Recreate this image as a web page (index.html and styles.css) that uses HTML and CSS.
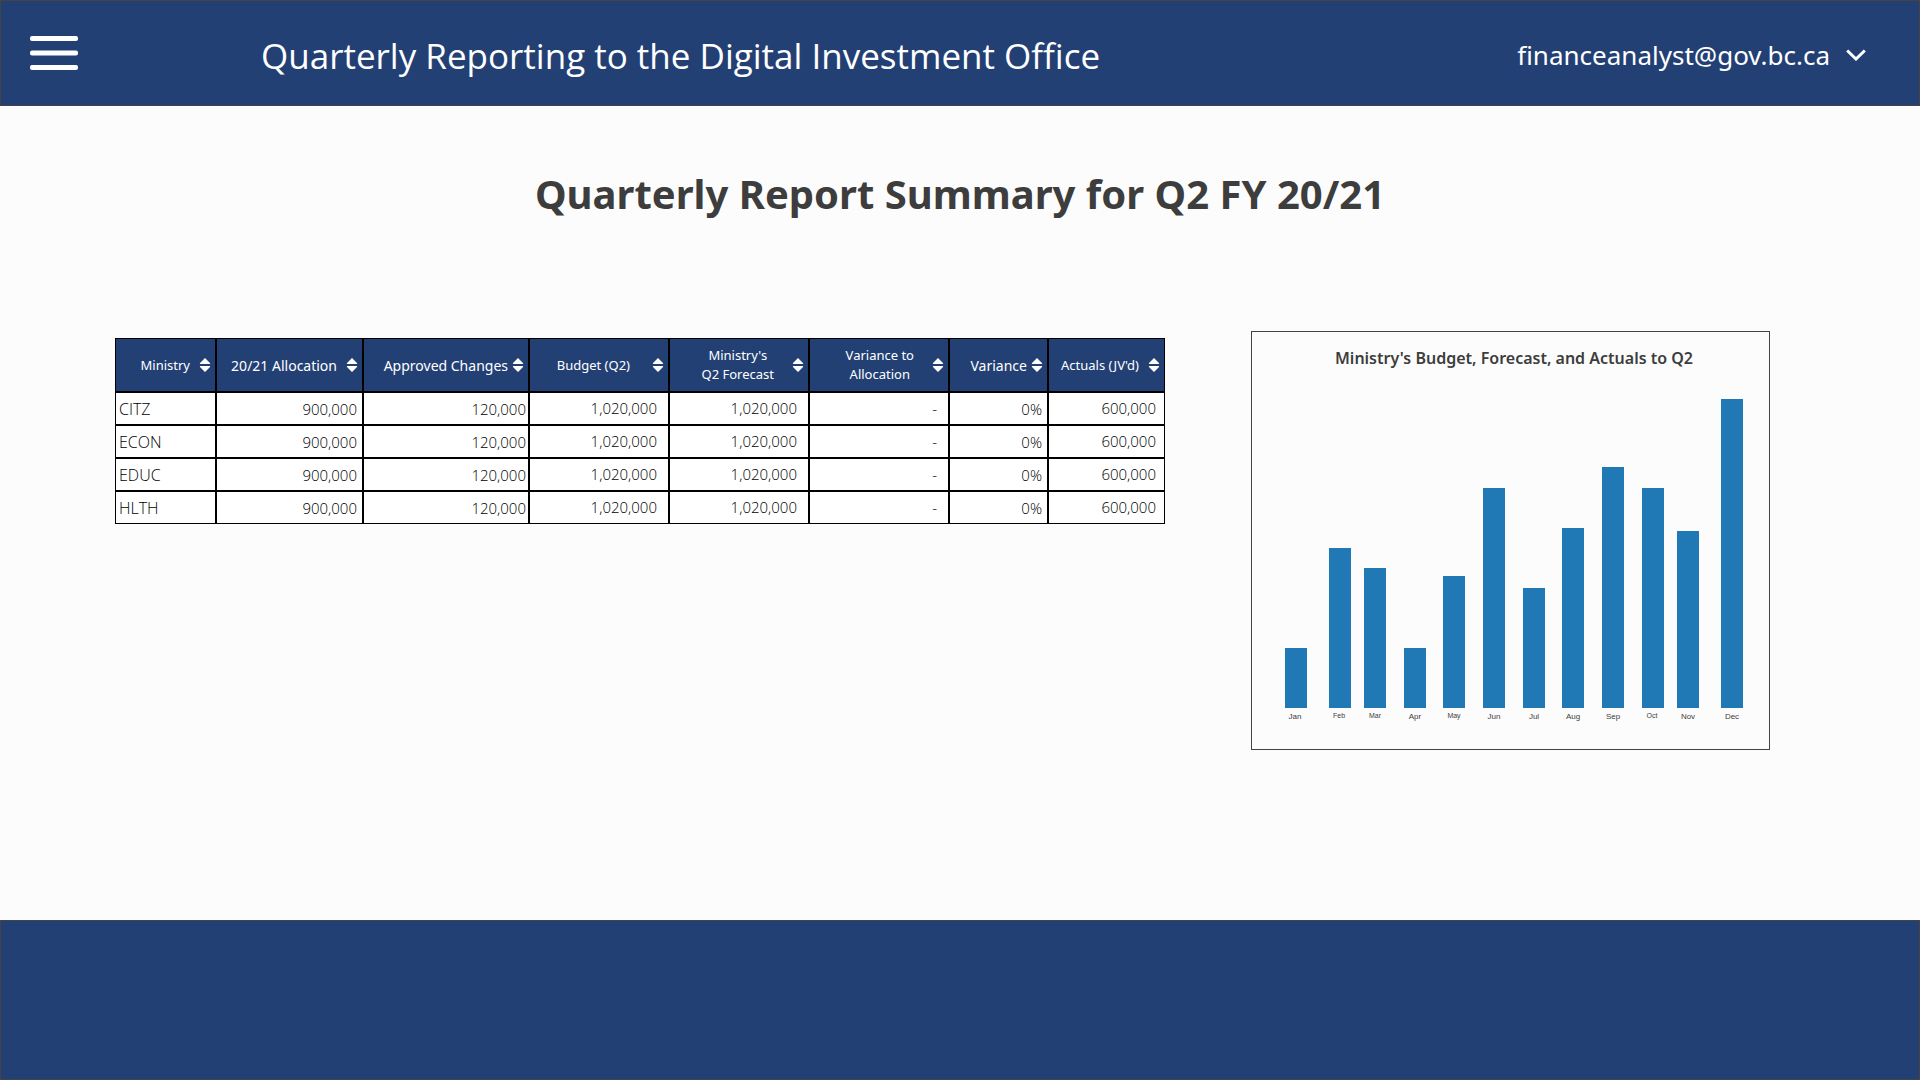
FILE: index.html
```html
<!DOCTYPE html>
<html lang="en">
<head>
<meta charset="utf-8">
<title>Quarterly Reporting to the Digital Investment Office</title>
<link rel="stylesheet" href="styles.css">
</head>
<body>
<svg class="sprite" aria-hidden="true">
  <symbol id="sort" viewBox="0 0 12 14"><path d="M6 0 L11 5 Q11.6 6 10.5 6 H1.500 Q.4 6 1 5 Z M6 14 L11 9 Q11.600 8 10.500 8 H1.500 Q.4 8 1 9 Z" fill="#fff"/></symbol>
</svg>
<header class="topbar">
  <button class="menu" type="button" aria-label="Menu">
    <svg width="48" height="34" viewBox="0 0 48 34"><g fill="#fff"><rect width="48" height="5" rx="2"/><rect y="14.500" width="48" height="5" rx="2"/><rect y="29" width="48" height="5" rx="2"/></g></svg>
  </button>
  <p class="brand">Quarterly Reporting to the Digital Investment Office</p>
  <button class="account" type="button">
    <span>financeanalyst@gov.bc.ca</span>
    <svg width="20" height="12" viewBox="0 0 20 12"><path d="M1.200 1.500 L10 10 L18.800 1.500" fill="none" stroke="#fff" stroke-width="3"/></svg>
  </button>
</header>
<main class="page">
  <h1>Quarterly Report Summary for Q2 FY 20/21</h1>
  <div class="report">
    <table class="summary">
      <colgroup><col class="w-ministry"><col class="w-allocation"><col class="w-changes"><col class="w-wide"><col class="w-wide"><col class="w-wide"><col class="w-variance"><col class="w-actuals"></colgroup>
      <thead>
        <tr>
          <th scope="col" class="compact"><button type="button" class="sort gap-m"><span>Ministry</span><svg><use href="#sort"/></svg></button></th>
          <th scope="col"><button type="button" class="sort gap-m"><span>20/21 Allocation</span><svg><use href="#sort"/></svg></button></th>
          <th scope="col"><button type="button" class="sort gap-s"><span>Approved Changes</span><svg><use href="#sort"/></svg></button></th>
          <th scope="col" class="compact"><button type="button" class="sort gap-xl"><span>Budget (Q2)</span><svg><use href="#sort"/></svg></button></th>
          <th scope="col" class="compact"><button type="button" class="sort gap-l"><span>Ministry's<br>Q2 Forecast</span><svg><use href="#sort"/></svg></button></th>
          <th scope="col" class="compact"><button type="button" class="sort gap-l"><span>Variance to<br>Allocation</span><svg><use href="#sort"/></svg></button></th>
          <th scope="col"><button type="button" class="sort gap-s"><span>Variance</span><svg><use href="#sort"/></svg></button></th>
          <th scope="col" class="compact"><button type="button" class="sort gap-m"><span>Actuals (JV'd)</span><svg><use href="#sort"/></svg></button></th>
        </tr>
      </thead>
      <tbody>
        <tr><td class="name">CITZ</td><td class="pad-m">900,000</td><td>120,000</td><td class="pad-l">1,020,000</td><td class="pad-l">1,020,000</td><td class="pad-l">-</td><td class="pad-m">0%</td><td class="pad-a">600,000</td></tr>
        <tr><td class="name">ECON</td><td class="pad-m">900,000</td><td>120,000</td><td class="pad-l">1,020,000</td><td class="pad-l">1,020,000</td><td class="pad-l">-</td><td class="pad-m">0%</td><td class="pad-a">600,000</td></tr>
        <tr><td class="name">EDUC</td><td class="pad-m">900,000</td><td>120,000</td><td class="pad-l">1,020,000</td><td class="pad-l">1,020,000</td><td class="pad-l">-</td><td class="pad-m">0%</td><td class="pad-a">600,000</td></tr>
        <tr><td class="name">HLTH</td><td class="pad-m">900,000</td><td>120,000</td><td class="pad-l">1,020,000</td><td class="pad-l">1,020,000</td><td class="pad-l">-</td><td class="pad-m">0%</td><td class="pad-a">600,000</td></tr>
      </tbody>
    </table>
    <figure class="chart">
      <figcaption>Ministry's Budget, Forecast, and Actuals to Q2</figcaption>
      <svg viewBox="0 0 517 340" role="img" aria-label="Monthly bar chart, January to December">
        <g fill="#2078b4">
          <rect x="33" y="238" width="22" height="60"/>
          <rect x="77" y="138" width="22" height="160"/>
          <rect x="112" y="158" width="22" height="140"/>
          <rect x="152" y="238" width="22" height="60"/>
          <rect x="191" y="166" width="22" height="132"/>
          <rect x="231" y="78" width="22" height="220"/>
          <rect x="271" y="178" width="22" height="120"/>
          <rect x="310" y="118" width="22" height="180"/>
          <rect x="350" y="57" width="22" height="241"/>
          <rect x="390" y="78" width="22" height="220"/>
          <rect x="425" y="121" width="22" height="177"/>
          <rect x="469" y="-11" width="22" height="309"/>
        </g>
        <g class="months">
          <text x="43" y="309">Jan</text><text x="87" y="308" class="small">Feb</text><text x="123" y="308" class="small">Mar</text><text x="163" y="309">Apr</text><text x="202" y="308" class="small">May</text><text x="242" y="309">Jun</text><text x="282" y="309">Jul</text><text x="321" y="309">Aug</text><text x="361" y="309">Sep</text><text x="400" y="308" class="small">Oct</text><text x="436" y="309">Nov</text><text x="480" y="309">Dec</text>
        </g>
      </svg>
    </figure>
  </div>
</main>
<footer class="footer"></footer>
</body>
</html>
```
FILE: styles.css
```css
* { box-sizing: border-box; }
body {
  margin: 0;
  min-height: 100vh;
  display: flex;
  flex-direction: column;
  background: #fcfcfc;
  color: #3d3d3d;
  font-family: "Noto Sans", "Open Sans", sans-serif;
}
button { border: 0; padding: 0; background: none; color: inherit; font: inherit; cursor: pointer; }
.sprite { display: none; }
.topbar {
  display: flex;
  align-items: center;
  height: 106px;
  padding: 0 53px 0 29px;
  background: #234075;
  border: 1px solid #444;
  color: #fff;
}
.menu { display: flex; }
.brand {
  margin: 0;
  padding: 6px 0 0 183px;
  font-family: "Open Sans", "Noto Sans", sans-serif;
  font-size: 35px;
  line-height: 48px;
}
.account {
  display: flex;
  align-items: center;
  gap: 16px;
  margin-left: auto;
  padding-top: 4px;
  font-size: 26px;
  line-height: 36px;
}
.page { flex: 1; }
h1 { margin: 60px 0 0; text-align: center; font-size: 40px; line-height: 56px; font-weight: 700; }
.report {
  display: grid;
  grid-template-columns: 1050fr 519fr;
  gap: 86px;
  align-items: start;
  margin-top: 109px;
  padding: 0 150px 40px 115px;
}
.summary {
  width: 100%;
  margin-top: 7px;
  table-layout: fixed;
  border-spacing: 0;
  border-collapse: separate;
  background: #fff;
  color: #000;
}
.w-ministry { width: 101px; }
.w-allocation { width: 147px; }
.w-changes { width: 166px; }
.w-wide { width: 140px; }
.w-variance { width: 99px; }
.w-actuals { width: 117px; }
th, td { border: 1px solid #000; padding: 0; }
th { height: 54px; background: #234075; color: #fff; font-size: 14px; line-height: 19px; font-weight: 400; }
th.compact { font-size: 13px; }
.sort { display: flex; align-items: center; justify-content: flex-end; width: 100%; padding-right: 4px; white-space: nowrap; }
.sort svg { flex: none; width: 12px; height: 14px; }
.gap-s { gap: 4px; }
.gap-m { gap: 9px; }
.gap-l { gap: 18px; }
.gap-xl { gap: 22px; }
td { height: 33px; padding-right: 2px; font-family: "Open Sans", "Noto Sans", sans-serif; font-size: 15px; line-height: 20px; font-weight: 350; text-align: right; }
.name { padding-left: 3px; font-size: 16px; text-align: left; }
.pad-m { padding-right: 5px; }
.pad-a { padding: 0 8px 2px 0; }
.pad-l { padding: 0 11px 2px 0; }
.chart { margin: 0; border: 1px solid #444; }
figcaption { padding: 14px 0 0 7px; text-align: center; font-size: 16px; line-height: 24px; font-weight: 600; }
.chart svg { display: block; width: 100%; margin-top: 40px; margin-bottom: -1px; overflow: visible; }
.months { fill: #3d3d3d; font: 8px "Liberation Sans", Arial, sans-serif; text-anchor: middle; }
.small { font-size: 7px; }
.footer { height: 160px; background: #234075; border: 1px solid #444; }
```
